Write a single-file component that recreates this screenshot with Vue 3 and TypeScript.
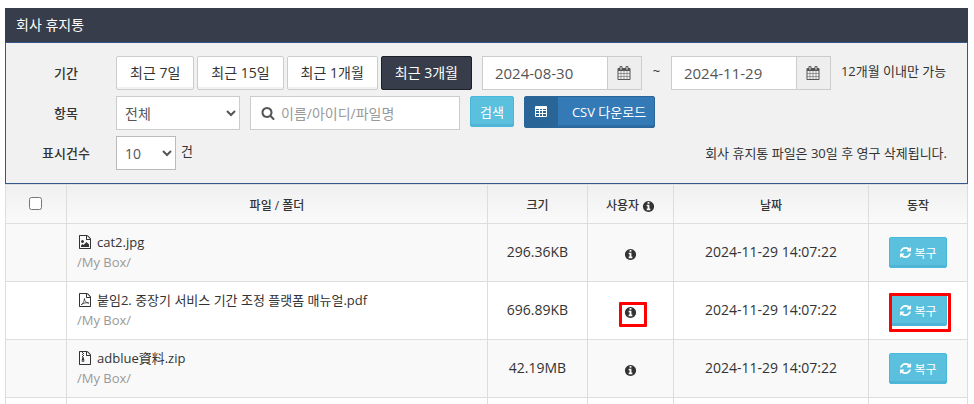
<script setup lang="ts">
import { ref } from 'vue'

interface TrashItem {
  name: string
  path: string
  kind: 'image' | 'pdf' | 'zip'
  size: string
  date: string
  marked: boolean
}

const periods: string[] = ['최근 7일', '최근 15일', '최근 1개월', '최근 3개월']
const activePeriod = ref<string>('최근 3개월')
const startDate = ref<string>('2024-08-30')
const endDate = ref<string>('2024-11-29')
const field = ref<string>('전체')
const keyword = ref<string>('')
const pageSize = ref<string>('10')
const allChecked = ref<boolean>(false)

const items: TrashItem[] = [
  { name: 'cat2.jpg', path: '/My Box/', kind: 'image', size: '296.36KB', date: '2024-11-29 14:07:22', marked: false },
  { name: '붙임2. 중장기 서비스 기간 조정 플랫폼 매뉴얼.pdf', path: '/My Box/', kind: 'pdf', size: '696.89KB', date: '2024-11-29 14:07:22', marked: true },
  { name: 'adblue資料.zip', path: '/My Box/', kind: 'zip', size: '42.19MB', date: '2024-11-29 14:07:22', marked: false },
]

const icons = {
  info: 'M1152 1376v-160q0-14-9-23t-23-9h-96v-512q0-14-9-23t-23-9h-320q-14 0-23 9t-9 23v160q0 14 9 23t23 9h96v320h-96q-14 0-23 9t-9 23v160q0 14 9 23t23 9h448q14 0 23-9t9-23zm-128-896v-160q0-14-9-23t-23-9h-192q-14 0-23 9t-9 23v160q0 14 9 23t23 9h192q14 0 23-9t9-23zm640 416q0 209-103 385.5t-279.5 279.5-385.5 103-385.5-103-279.5-279.5-103-385.5 103-385.5 279.5-279.5 385.5-103 385.5 103 279.5 279.5 103 385.5z',
  search: 'M1216 832q0-185-131.5-316.5t-316.5-131.5-316.5 131.5-131.5 316.5 131.5 316.5 316.5 131.5 316.5-131.5 131.5-316.5zm512 832q0 52-38 90t-90 38q-54 0-90-38l-343-342q-179 124-399 124-143 0-273.5-55.5t-225-150-150-225-55.5-273.5 55.5-273.5 150-225 225-150 273.5-55.5 273.5 55.5 225 150 150 225 55.5 273.5q0 220-124 399l343 343q37 37 37 90z',
  refresh: 'M1639 1056q0 5-1 7-64 268-268 434.5t-478 166.5q-146 0-282.5-55t-243.5-157l-129 129q-19 19-45 19t-45-19-19-45v-448q0-26 19-45t45-19h448q26 0 45 19t19 45-19 45l-137 137q71 66 161 102t187 36q134 0 250-65t186-179q11-17 53-117 8-23 30-23h192q13 0 22.5 9.5t9.5 22.5zm25-800v448q0 26-19 45t-45 19h-448q-26 0-45-19t-19-45 19-45l138-138q-148-137-349-137-134 0-250 65t-186 179q-11 17-53 117-8 23-30 23h-199q-13 0-22.5-9.5t-9.5-22.5v-7q65-268 270-434.5t480-166.5q146 0 284 55.5t245 156.5l130-129q19-19 45-19t45 19 19 45z',
  calendar: 'M192 1664h288v-288h-288v288zm352 0h320v-288h-320v288zm-352-352h288v-320h-288v320zm352 0h320v-320h-320v320zm-352-384h288v-288h-288v288zm736 736h320v-288h-320v288zm-384-736h320v-288h-320v288zm768 736h288v-288h-288v288zm-384-352h320v-320h-320v320zm-352-864v-288q0-13-9.5-22.5t-22.5-9.5h-64q-13 0-22.5 9.5t-9.5 22.5v288q0 13 9.5 22.5t22.5 9.5h64q13 0 22.5-9.5t9.5-22.5zm736 864h288v-320h-288v320zm-384-384h320v-288h-320v288zm384 0h288v-288h-288v288zm32-480v-288q0-13-9.5-22.5t-22.5-9.5h-64q-13 0-22.5 9.5t-9.5 22.5v288q0 13 9.5 22.5t22.5 9.5h64q13 0 22.5-9.5t9.5-22.5zm384-64v1280q0 52-38 90t-90 38h-1408q-52 0-90-38t-38-90v-1280q0-52 38-90t90-38h128v-96q0-66 47-113t113-47h64q66 0 113 47t47 113v96h384v-96q0-66 47-113t113-47h64q66 0 113 47t47 113v96h128q52 0 90 38t38 90z',
  sheet: 'M1596 380q28 28 48 76t20 88v1152q0 40-28 68t-68 28h-1344q-40 0-68-28t-28-68v-1600q0-40 28-68t68-28h896q40 0 88 20t76 48zm-444-244v376h376q-10-29-22-41l-313-313q-12-12-41-22zm384 1528v-1024h-416q-40 0-68-28t-28-68v-416h-768v1536h1280z',
  picture: 'M1408 1216v320h-1024v-192l192-192 128 128 384-384zm-832-192q-80 0-136-56t-56-136 56-136 136-56 136 56 56 136-56 136-136 56z',
}
</script>

<template>
  <main class="page">
    <h1 class="title">회사 휴지통</h1>

    <form class="filters" @submit.prevent>
      <div class="row">
        <span class="label">기간</span>
        <div class="periods">
          <button
            v-for="p in periods"
            :key="p"
            type="button"
            class="period"
            :class="{ active: p === activePeriod }"
            @click="activePeriod = p"
          >{{ p }}</button>
        </div>
        <div class="date">
          <input v-model="startDate" type="text" aria-label="시작일" />
          <button type="button" class="addon" aria-label="시작일 선택">
            <svg class="icon" viewBox="0 0 1792 1792"><path :d="icons.calendar" /></svg>
          </button>
        </div>
        <span class="tilde">~</span>
        <div class="date">
          <input v-model="endDate" type="text" aria-label="종료일" />
          <button type="button" class="addon" aria-label="종료일 선택">
            <svg class="icon" viewBox="0 0 1792 1792"><path :d="icons.calendar" /></svg>
          </button>
        </div>
        <span class="hint">12개월 이내만 가능</span>
      </div>

      <div class="row">
        <label class="label" for="field">항목</label>
        <select id="field" v-model="field" class="select wide">
          <option>전체</option>
        </select>
        <div class="search">
          <svg class="icon" viewBox="0 0 1792 1792"><path :d="icons.search" /></svg>
          <input v-model="keyword" type="text" placeholder="이름/아이디/파일명" aria-label="검색어" />
        </div>
        <button type="submit" class="btn info">검색</button>
        <button type="button" class="csv">
          <span class="csv-icon">
            <svg class="icon" viewBox="0 0 14 14">
              <path fill-rule="evenodd" d="M2 1h10a1 1 0 0 1 1 1v9a1 1 0 0 1-1 1H2a1 1 0 0 1-1-1V2a1 1 0 0 1 1-1zM2 4v1h3V4zM6 4v1h2V4zM9 4v1h3V4zM2 6v2h3V6zM6 6v2h2V6zM9 6v2h3V6zM2 9v2h3V9zM6 9v2h2V9zM9 9v2h3V9z" />
            </svg>
          </span>
          <span class="csv-text">CSV 다운로드</span>
        </button>
      </div>

      <div class="row">
        <label class="label" for="page-size">표시건수</label>
        <select id="page-size" v-model="pageSize" class="select narrow">
          <option>10</option>
        </select>
        <span class="unit">건</span>
        <span class="notice">회사 휴지통 파일은 30일 후 영구 삭제됩니다.</span>
      </div>
    </form>

    <table class="list">
      <colgroup>
        <col class="c-check" />
        <col />
        <col class="c-size" />
        <col class="c-user" />
        <col class="c-date" />
        <col class="c-action" />
      </colgroup>
      <thead>
        <tr>
          <th class="check"><input v-model="allChecked" type="checkbox" aria-label="전체 선택" /></th>
          <th>파일 / 폴더</th>
          <th>크기</th>
          <th>사용자 <svg class="icon small" viewBox="0 0 1792 1792"><path :d="icons.info" /></svg></th>
          <th>날짜</th>
          <th>동작</th>
        </tr>
      </thead>
      <tbody>
        <tr v-for="item in items" :key="item.name">
          <td></td>
          <td class="file">
            <div class="name">
              <svg class="icon" viewBox="0 0 1792 1792">
                <path :d="icons.sheet" />
                <path v-if="item.kind === 'image'" :d="icons.picture" />
                <path
                  v-else-if="item.kind === 'pdf'"
                  class="line"
                  d="M400 1500C620 1400 820 1020 830 700C810 1000 1000 1250 1400 1290C1100 1180 700 1280 400 1500"
                />
                <path v-else d="M512 128h128v128h-128zM640 256h128v128h-128zM512 384h128v128h-128zM640 512h128v128h-128zM512 640h128v128h-128zM576 768h128l110 420q20 230-174 230t-174-230zM640 1180q-90 0-90 60t90 60 90-60-90-60z" fill-rule="evenodd" />
              </svg>
              <span>{{ item.name }}</span>
            </div>
            <div class="path">{{ item.path }}</div>
          </td>
          <td class="value">{{ item.size }}</td>
          <td>
            <span class="spot user">
              <svg class="icon small" viewBox="0 0 1792 1792"><path :d="icons.info" /></svg>
              <span v-if="item.marked" class="mark mark-user"></span>
            </span>
          </td>
          <td class="value">{{ item.date }}</td>
          <td>
            <span class="spot">
              <button type="button" class="btn info restore">
                <svg class="icon small" viewBox="0 0 1792 1792"><path :d="icons.refresh" /></svg>
                <span>복구</span>
              </button>
              <span v-if="item.marked" class="mark mark-action"></span>
            </span>
          </td>
        </tr>
        <tr>
          <td></td><td></td><td></td><td></td><td></td><td></td>
        </tr>
      </tbody>
    </table>
  </main>
</template>

<style>
body {
  margin: 0;
  background: #fff;
}
</style>

<style scoped>
.page {
  box-sizing: border-box;
  max-height: 100vh;
  overflow: hidden;
  padding: 8px 6px 0 5px;
  font-family: "Open Sans", "Noto Sans CJK KR", sans-serif;
  font-size: 13px;
  line-height: 20px;
  color: #333;
}
.page *,
.page *::before {
  box-sizing: border-box;
}
button,
input,
select {
  margin: 0;
  font-family: inherit;
  color: inherit;
}
.icon {
  width: 14px;
  height: 14px;
  fill: currentColor;
  flex: none;
}
.icon.small {
  width: 13px;
  height: 13px;
}
.title {
  margin: 0;
  padding: 7px 11px;
  background: #373d4a;
  color: #fff;
  font-size: 14px;
  font-weight: 400;
  line-height: 20px;
}
.filters {
  display: flex;
  flex-direction: column;
  gap: 6px;
  padding: 13px 0 13px 10px;
  border: 1px solid #34588b;
  background: #f1f1f1;
}
.row {
  display: flex;
  align-items: flex-start;
  height: 34px;
  white-space: nowrap;
}
.label {
  width: 100px;
  flex: none;
  line-height: 34px;
  text-align: center;
  font-weight: 500;
}
.periods {
  display: flex;
  gap: 3px;
  margin-right: 10px;
}
.period {
  height: 34px;
  padding: 0 13px;
  border: 1px solid #ccc;
  border-radius: 2px;
  background: #fff;
  box-shadow: inset 0 -2px 0 #f2f2f2;
  font-size: 14px;
  line-height: 32px;
}
.period.active {
  border-color: #1d2026;
  background: #373d4a;
  box-shadow: none;
  color: #fff;
}
.date {
  display: flex;
  width: 160px;
  height: 34px;
  border: 1px solid #ccc;
  background: #fff;
}
.date input {
  flex: 1;
  min-width: 0;
  padding: 0 12px;
  border: 0;
  background: transparent;
  color: #555;
  font-size: 15px;
}
.addon {
  display: flex;
  align-items: center;
  justify-content: center;
  width: 34px;
  padding: 0;
  border: 0;
  border-left: 1px solid #ccc;
  background: #eee;
  color: #555;
}
.tilde {
  width: 29px;
  text-align: center;
  line-height: 30px;
}
.hint {
  margin-left: 10px;
  line-height: 30px;
}
.select {
  height: 34px;
  padding: 0 4px;
  border: 1px solid #bbb;
  border-radius: 0;
  background: #fff;
  color: #555;
  font-size: 14px;
}
.wide {
  width: 124px;
  border-color: #ccc;
}
.narrow {
  width: 60px;
}
.search {
  display: flex;
  align-items: center;
  gap: 6px;
  width: 210px;
  height: 34px;
  margin: 0 10px;
  padding: 0 10px;
  border: 1px solid #ccc;
  background: #fff;
  color: #555;
}
.search input {
  flex: 1;
  min-width: 0;
  padding: 0;
  border: 0;
  background: transparent;
  font-size: 14px;
}
.search input::placeholder {
  color: #999;
}
.btn {
  display: inline-flex;
  align-items: center;
  justify-content: center;
  gap: 2px;
  height: 31px;
  padding: 0 9px;
  border: 1px solid #46b8da;
  border-radius: 2px;
  background: #5bc0de;
  box-shadow: inset 0 -2px 0 #51b4d6;
  color: #fff;
  font-size: 13px;
}
.csv {
  display: flex;
  height: 32px;
  margin-left: 10px;
  padding: 0;
  border: 1px solid #2b669a;
  border-radius: 2px;
  background: #337ab7;
  box-shadow: inset 0 -2px 0 #2d6da3;
  color: #fff;
  font-size: 13px;
}
.csv-icon {
  display: flex;
  align-items: center;
  justify-content: center;
  width: 33px;
  height: 30px;
  background: #2a6598;
}
.csv-text {
  padding: 0 8px 0 14px;
  line-height: 30px;
}
.unit {
  margin-left: 5px;
  line-height: 30px;
}
.notice {
  margin-left: auto;
  padding-right: 20px;
  line-height: 34px;
}
.list {
  width: 100%;
  table-layout: fixed;
  border-collapse: collapse;
}
.c-check {
  width: 61px;
}
.c-size {
  width: 100px;
}
.c-user {
  width: 86px;
}
.c-date {
  width: 195px;
}
.c-action {
  width: 99px;
}
th,
td {
  padding: 0;
  border: 1px solid #ddd;
  text-align: center;
  vertical-align: middle;
}
th {
  height: 39px;
  padding-top: 4px;
  background: linear-gradient(#f0f0f0, #fafafa);
  font-size: 12px;
  font-weight: 500;
}
th .icon.small {
  vertical-align: -3px;
}
th.check {
  padding: 0 2px 2px 0;
}
.check input {
  display: block;
  margin: 0 auto;
}
td {
  height: 58px;
}
tbody tr:nth-child(odd) {
  background: #f9f9f9;
}
.value {
  padding-bottom: 2px;
  font-size: 14px;
}
.file {
  padding: 0 10px 2px;
  text-align: left;
}
.name {
  display: flex;
  align-items: center;
  gap: 5px;
  padding-left: 1px;
}
.path {
  color: #999;
}
.line {
  fill: none;
  stroke: currentColor;
  stroke-width: 100;
}
.spot {
  position: relative;
  display: inline-flex;
  vertical-align: middle;
}
.restore {
  width: 58px;
  padding: 0;
  font-size: 12px;
  white-space: nowrap;
}
.mark {
  position: absolute;
  border: 3px solid #f00;
  border-radius: 1px;
  pointer-events: none;
}
.mark-user {
  top: -4px;
  left: -5px;
  width: 28px;
  height: 25px;
}
.mark-action {
  top: -2px;
  left: 0;
  width: 62px;
  height: 39px;
}
</style>
